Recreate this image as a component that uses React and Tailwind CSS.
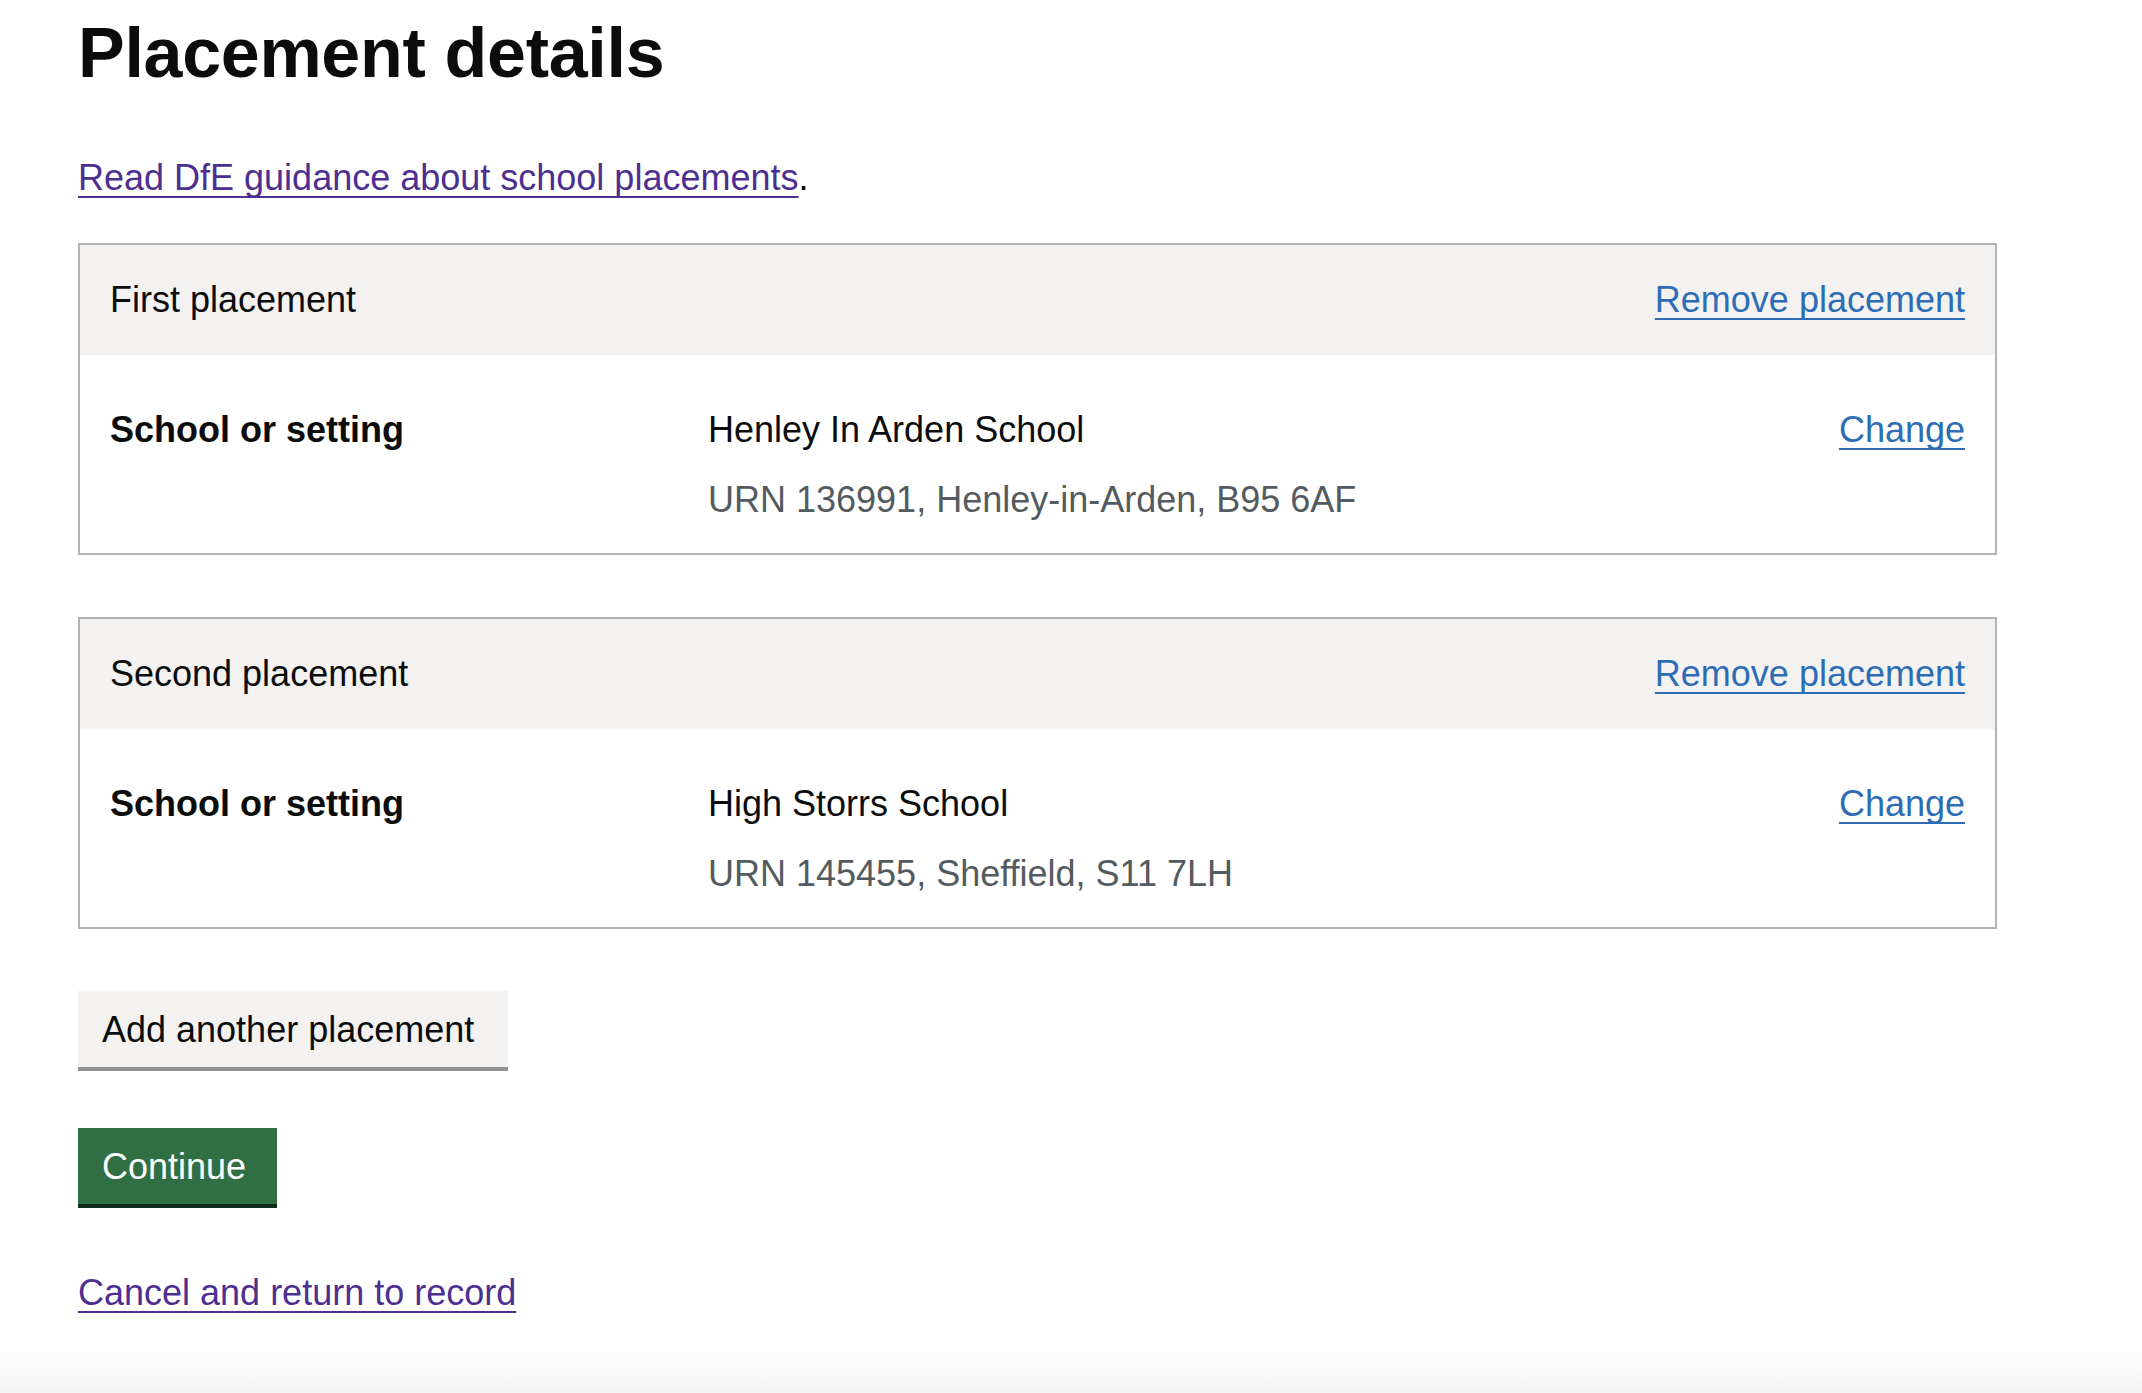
const placements = [
  {
    title: "First placement",
    name: "Henley In Arden School",
    detail: "URN 136991, Henley-in-Arden, B95 6AF",
  },
  {
    title: "Second placement",
    name: "High Storrs School",
    detail: "URN 145455, Sheffield, S11 7LH",
  },
];

const linkClass = "underline decoration-[2px] underline-offset-[6px] [text-decoration-skip-ink:none]";

const PlacementCard = ({ placement }) => {
  return (
    <div className="border-2 border-[#b1b4b6] mb-[62px]">
      <div className="bg-[#f3f2f1] flex items-center justify-between px-[30px] py-[30px]">
        <h2 className="text-[36px] leading-[50px] font-normal text-[#0b0c0c]">{placement.title}</h2>
        <a href="#" className={`text-[36px] leading-[50px] text-[#2d6db5] ${linkClass}`}>
          Remove placement
        </a>
      </div>
      <div className="px-[30px] pt-[50px] pb-[28px] grid grid-cols-[598px_1fr_auto]">
        <div className="text-[36px] leading-[50px] font-bold text-[#0b0c0c]">School or setting</div>
        <div className="flex flex-col gap-[20px]">
          <p className="text-[36px] leading-[50px] text-[#0b0c0c]">{placement.name}</p>
          <p className="text-[36px] leading-[50px] text-[#545b60]">{placement.detail}</p>
        </div>
        <div>
          <a href="#" className={`text-[36px] leading-[50px] text-[#2d6db5] ${linkClass}`}>
            Change
          </a>
        </div>
      </div>
    </div>
  );
};

export default function App() {
  return (
    <div className="min-h-[1393px] flex flex-col bg-white font-['Liberation_Sans',Arial,sans-serif] text-[#0b0c0c]">
      <main className="ml-[78px] w-[1919px] pt-[13px]">
        <h1 className="text-[70px] leading-[80px] font-bold tracking-[-0.3px] mb-[60px]">Placement details</h1>

        <p className="text-[36px] leading-[50px] mb-[40px]">
          <a href="#" className={`text-[#4c2f91] ${linkClass}`}>
            Read DfE guidance about school placements
          </a>
          .
        </p>

        {placements.map((p) => (
          <PlacementCard key={p.title} placement={p} />
        ))}

        <div className="flex flex-col items-start">
          <button className="w-[430px] text-left bg-[#f3f2f1] text-[#0b0c0c] text-[36px] leading-[38px] px-[24px] pt-[20px] pb-[18px] shadow-[0_4px_0_#929191] mb-[61px]">
            Add another placement
          </button>
          <button className="w-[199px] text-left bg-[#306f44] text-white text-[36px] leading-[38px] px-[24px] pt-[20px] pb-[18px] shadow-[0_4px_0_#0f2a19] mb-[64px]">
            Continue
          </button>
          <a href="#" className={`text-[36px] leading-[50px] text-[#4c2f91] ${linkClass}`}>
            Cancel and return to record
          </a>
        </div>
      </main>
      <div className="flex-1" />
      <div className="h-[45px] bg-linear-to-b from-white to-[#f3f3f3]" />
    </div>
  );
}
